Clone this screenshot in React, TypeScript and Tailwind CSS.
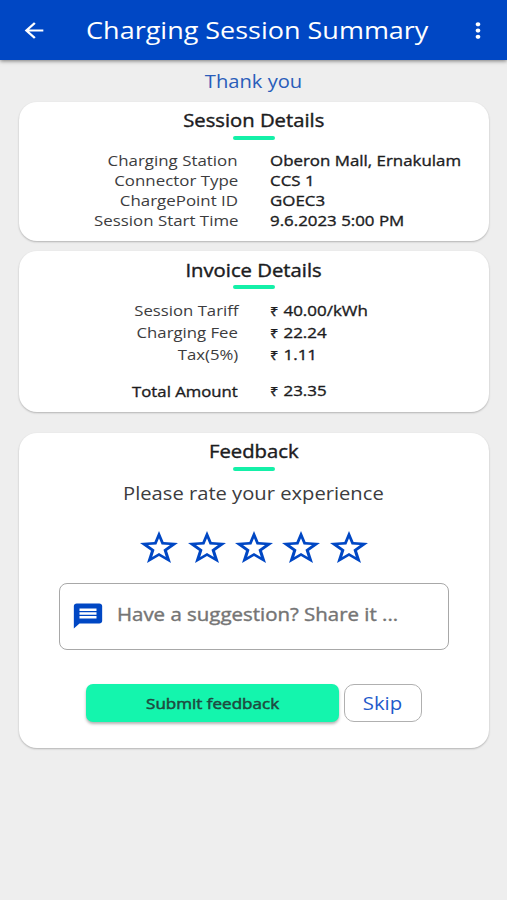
import React, { useState } from 'react';

const sessionRows = [
  { label: 'Charging Station', value: 'Oberon Mall, Ernakulam' },
  { label: 'Connector Type', value: 'CCS 1' },
  { label: 'ChargePoint ID', value: 'GOEC3' },
  { label: 'Session Start Time', value: '9.6.2023 5:00 PM' },
];

const invoiceRows = [
  { label: 'Session Tariff', value: '40.00/kWh' },
  { label: 'Charging Fee', value: '22.24' },
  { label: 'Tax(5%)', value: '1.11' },
];

const starOuter = 'M19 0l4.6 11L38 12 27 19.7 31 32 19 25 7 32l4-12.3L0 12l14.4-1z';
const starInner = 'M19 7.2l-2.6 6.2L8 14l6.5 4.7-2.3 7.3L19 22l6.8 4-2.3-7.3L30 14l-8.4-.6z';

function CardTitle({ children }: { children: React.ReactNode }) {
  return (
    <div className="flex flex-col items-center">
      <h2 className="h-7 origin-center scale-x-[1.125] text-[18px] leading-7 text-[#1c1c1e] [-webkit-text-stroke:0.4px_#1c1c1e]">
        {children}
      </h2>
      <div className="mt-[1.5px] h-1 w-[42px] rounded-full bg-[#14f0a8]" />
    </div>
  );
}

function Price({ children }: { children: React.ReactNode }) {
  return (
    <span className="flex origin-left scale-x-[1.13] items-baseline gap-[4.5px]">
      <span className="text-[13px] leading-none">₹</span>
      <span>{children}</span>
    </span>
  );
}

export default function App() {
  const [rating, setRating] = useState(0);

  return (
    <div className="h-[900px] w-[507px] overflow-hidden bg-[#eeeeee] font-['Open_Sans','Noto_Sans',sans-serif] whitespace-nowrap">
      <header className="relative flex h-[60px] items-center justify-between bg-[#0047c4] pr-[15px] pl-[20px] text-white shadow-[0_1px_4px_rgba(0,0,0,0.5)]">
        <button aria-label="Back">
          <svg width="28" height="25" viewBox="0 0 24 24" preserveAspectRatio="none" fill="currentColor">
            <path d="M20 11H7.83l5.59-5.59L12 4l-8 8 8 8 1.41-1.41L7.83 13H20v-2z" />
          </svg>
        </button>
        <h1 className="ml-[3px] origin-center scale-x-[1.124] text-[24px] leading-8">Charging Session Summary</h1>
        <button aria-label="More">
          <svg width="28" height="25" viewBox="0 0 24 24" preserveAspectRatio="none" fill="currentColor">
            <path d="M12 8c1.1 0 2-.9 2-2s-.9-2-2-2-2 .9-2 2 .9 2 2 2zm0 2c-1.1 0-2 .9-2 2s.9 2 2 2 2-.9 2-2-.9-2-2-2zm0 6c-1.1 0-2 .9-2 2s.9 2 2 2 2-.9 2-2-.9-2-2-2z" />
          </svg>
        </button>
      </header>

      <main className="flex flex-col pr-[18px] pl-[19px]">
        <p className="flex h-[42px] items-center justify-center text-[18px] text-[#2a5dba]">
          <span className="scale-x-[1.12]">Thank you</span>
        </p>

        <section className="h-[139px] rounded-[18px] bg-white pt-[4px] shadow-[0_1px_2px_rgba(0,0,0,0.25)]">
          <CardTitle>Session Details</CardTitle>
          <dl className="mt-[10.5px] text-[15px] leading-5">
            {sessionRows.map((row) => (
              <div key={row.label} className="flex gap-[31.5px]">
                <dt className="w-[219px] text-right text-[#3c3c3e]">
                  <span className="inline-block origin-right scale-x-[1.125]">{row.label}</span>
                </dt>
                <dd className="text-[#1c1c1e] [-webkit-text-stroke:0.35px_#1c1c1e]">
                  <span className="inline-block origin-left scale-x-[1.125]">{row.value}</span>
                </dd>
              </div>
            ))}
          </dl>
        </section>

        <section className="mt-[10px] h-[161px] rounded-[18px] bg-white pt-[4.5px] shadow-[0_1px_2px_rgba(0,0,0,0.25)]">
          <CardTitle>Invoice Details</CardTitle>
          <dl className="mt-[10px] text-[15px] leading-[22px]">
            {invoiceRows.map((row) => (
              <div key={row.label} className="flex h-[22px] gap-[32px]">
                <dt className="w-[219px] text-right text-[#3c3c3e]">
                  <span className="inline-block origin-right scale-x-[1.115]">{row.label}</span>
                </dt>
                <dd className="text-[#1c1c1e] [-webkit-text-stroke:0.35px_#1c1c1e]">
                  <Price>{row.value}</Price>
                </dd>
              </div>
            ))}
            <div className="mt-[14.5px] flex gap-[32px] text-[#1c1c1e] [-webkit-text-stroke:0.35px_#1c1c1e]">
              <dt className="w-[219px] text-right">
                <span className="inline-block origin-right scale-x-[1.115]">Total Amount</span>
              </dt>
              <dd className="-mt-px">
                <Price>23.35</Price>
              </dd>
            </div>
          </dl>
        </section>

        <section className="mt-[21px] h-[315px] rounded-[18px] bg-white pt-[4px] shadow-[0_1px_2px_rgba(0,0,0,0.25)]">
          <CardTitle>Feedback</CardTitle>
          <p className="mt-[8.5px] mr-[1px] flex h-7 items-center justify-center text-[18px] text-[#3c3c3e]">
            <span className="scale-x-[1.12]">Please rate your experience</span>
          </p>

          <div className="mt-[24px] flex h-8 justify-center gap-[9.3px]">
            {[1, 2, 3, 4, 5].map((star) => (
              <button key={star} aria-label={`${star} stars`} onClick={() => setRating(star)}>
                <svg width="38" height="32" viewBox="0 0 38 32" fill="#0047c4">
                  <path d={star <= rating ? starOuter : `${starOuter}${starInner}`} fillRule="evenodd" />
                </svg>
              </button>
            ))}
          </div>

          <div className="mx-[40px] mt-[20px] flex h-[67px] items-center rounded-[8px] border-[1.5px] border-[#a8a8a8] pl-[11px]">
            <svg className="mb-[2px]" width="34" height="30" viewBox="0 0 24 24" preserveAspectRatio="none" fill="#0047c4">
              <path d="M20 2H4c-1.1 0-1.99.9-1.99 2L2 22l4-4h14c1.1 0 2-.9 2-2V4c0-1.1-.9-2-2-2zM6 9h12v2H6V9zm12 5H6v-2h12v2zm0-6H6V6h12v2z" />
            </svg>
            <span className="mb-[4px] ml-[12px] origin-left scale-x-[1.135] text-[18px] text-[#757575] [-webkit-text-stroke:0.4px_#757575]">
              Have a suggestion? Share it ...
            </span>
          </div>

          <div className="mt-[34px] flex gap-[5px] pl-[67px]">
            <button className="flex h-[38px] w-[253px] items-center justify-center rounded-[7px] bg-[#14f5ad] text-[15px] text-[#1f4a40] shadow-[0_2px_3px_rgba(0,0,0,0.3)] [-webkit-text-stroke:0.5px_#1f4a40]">
              <span className="scale-x-[1.135]">Submit feedback</span>
            </button>
            <button className="flex h-[38px] w-[78px] items-center justify-center rounded-[10px] border-[1.5px] border-[#b0b0b0] pr-[2px] text-[18px] text-[#1f5acb]">
              <span className="scale-x-[1.13]">Skip</span>
            </button>
          </div>
        </section>
      </main>
    </div>
  );
}
